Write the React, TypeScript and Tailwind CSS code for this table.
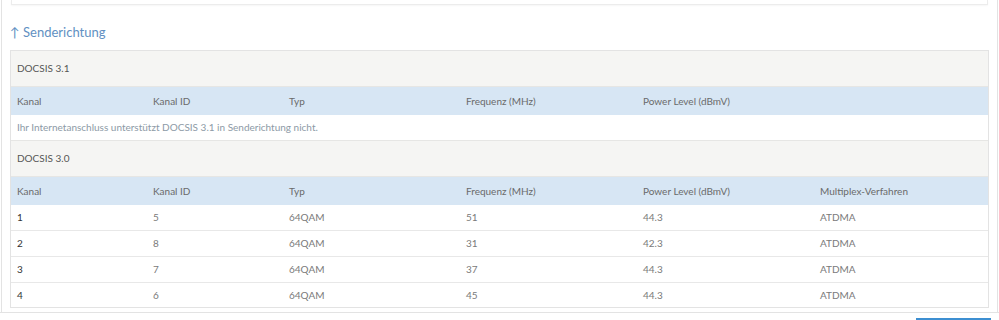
const COLS = ['w-[136px]', 'w-[136px]', 'w-[177px]', 'w-[177px]', 'w-[177px]', 'flex-1'];

const HEAD_31 = ['Kanal', 'Kanal ID', 'Typ', 'Frequenz (MHz)', 'Power Level (dBmV)'];
const HEAD_30 = [...HEAD_31, 'Multiplex-Verfahren'];

const ROWS = [
  ['1', '5', '64QAM', '51', '44.3', 'ATDMA'],
  ['2', '8', '64QAM', '31', '42.3', 'ATDMA'],
  ['3', '7', '64QAM', '37', '44.3', 'ATDMA'],
  ['4', '6', '64QAM', '45', '44.3', 'ATDMA'],
];

function SectionRow({ title }: { title: string }) {
  return (
    <div className="flex h-[36px] items-center border-b border-[#e6e6e4] bg-[#f5f5f3] pl-[6px] text-[#555]">
      {title}
    </div>
  );
}

function HeadRow({ cells }: { cells: string[] }) {
  return (
    <div className="flex h-[28px] items-center bg-[#d7e6f4] text-[#6a6a6a]">
      {cells.map((c, i) => (
        <div key={i} className={`${COLS[i]} pl-[6px]`}>
          {c}
        </div>
      ))}
    </div>
  );
}

function DataRow({ cells, last }: { cells: string[]; last?: boolean }) {
  return (
    <div
      className={`flex items-center bg-white text-[#7a7a7a] ${last ? 'h-[24px]' : 'h-[26px] border-b border-[#e8e8e8]'}`}
    >
      {cells.map((c, i) => (
        <div key={i} className={`${COLS[i]} pl-[6px] ${i === 0 ? 'text-[#333]' : ''}`}>
          {c}
        </div>
      ))}
    </div>
  );
}

export default function App() {
  return (
    <div className="h-[320px] w-[999px] overflow-hidden bg-white font-['Lato','Liberation_Sans',sans-serif]">
      <div className="mx-[1px] h-[312px] border-x border-[#e3e3e3]">
        <div className="mx-[9px] h-[5px] border-x border-b border-[#ececec] shadow-[0_1px_2px_rgba(0,0,0,0.04)]" />
        <h2 className="mx-[8px] mt-[18px] h-[18px] text-[13px] leading-[18px] text-[#6190c2]">
          ↑ Senderichtung
        </h2>
        <div className="mx-[8px] mt-[9px] border border-[#e3e3e3] text-[10px]">
          <SectionRow title="DOCSIS 3.1" />
          <HeadRow cells={HEAD_31} />
          <div className="flex h-[26px] items-center border-b border-[#e6e6e4] pl-[6px] text-[#8d9aa6]">
            Ihr Internetanschluss unterstützt DOCSIS 3.1 in Senderichtung nicht.
          </div>
          <SectionRow title="DOCSIS 3.0" />
          <HeadRow cells={HEAD_30} />
          {ROWS.map((r, i) => (
            <DataRow key={i} cells={r} last={i === ROWS.length - 1} />
          ))}
        </div>
      </div>
      <div className="flex h-[8px] justify-end border-t border-[#e3e3e3] pr-[8px]">
        <div className="mt-[5px] h-[3px] w-[75px] bg-[#3d8fd1]" />
      </div>
    </div>
  );
}
